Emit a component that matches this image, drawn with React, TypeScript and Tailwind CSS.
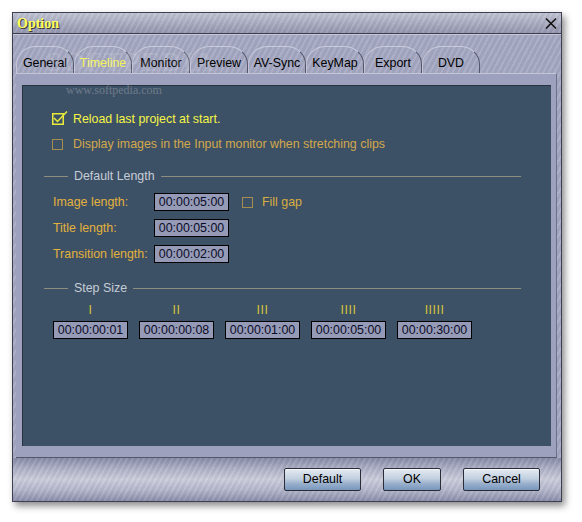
import React from "react";

const tabs = ["General", "Timeline", "Monitor", "Preview", "AV-Sync", "KeyMap", "Export", "DVD"];

function TimeBox({ v }: { v: string }) {
  return (
    <div className="w-[75px] h-[18px] border border-black bg-[#959ab7] text-[#0b0b26] text-[12.4px] leading-[16px] flex items-center justify-center">
      {v}
    </div>
  );
}

function Header({ title }: { title: string }) {
  return (
    <div className="flex items-center h-[14px] pl-[21px] pr-[30px]">
      <div className="w-[24px] h-px bg-[#8f8b7e]" />
      <div className="px-[6px] text-[12.4px] text-[#c5ccd6] leading-[14px] whitespace-nowrap">{title}</div>
      <div className="flex-1 h-px bg-[#8f8b7e]" />
    </div>
  );
}

function Box() {
  return <div className="w-[11px] h-[11px] border border-[#a68c4f]" />;
}

function Btn({ label, w }: { label: string; w: string }) {
  return (
    <div
      className={`${w} h-[23px] rounded-[2px] border border-[#2a2c38] bg-[linear-gradient(to_bottom,#e4eaf2_0%,#c3d0e0_45%,#98b0cc_70%,#7896bb_100%)] shadow-[inset_0_1px_0_rgba(255,255,255,0.7)] flex items-center justify-center text-[12.4px] text-black`}
    >
      {label}
    </div>
  );
}

export default function App() {
  return (
    <div className="w-[582px] h-[522px] bg-white pt-[12px] pl-[12px] font-['Liberation_Sans',Arial,sans-serif]">
      <div className="relative w-[550px] h-[490px] flex flex-col border border-[#3e4052] bg-[#a5a8c2] bg-[repeating-linear-gradient(118deg,rgba(255,255,255,0.08)_0px,rgba(255,255,255,0.08)_2px,rgba(0,0,0,0.035)_2px,rgba(0,0,0,0.035)_5px)] shadow-[3px_4px_7px_rgba(0,0,0,0.45)]">
        {/* title bar */}
        <div className="h-[20px] flex items-center justify-between pl-[4px] pr-[4px] bg-[repeating-linear-gradient(118deg,rgba(255,255,255,0.08)_0px,rgba(255,255,255,0.08)_2px,rgba(0,0,0,0.035)_2px,rgba(0,0,0,0.035)_5px),linear-gradient(to_bottom,#c1c4d4,#9396af)]">
          <span className="font-['Liberation_Serif',serif] font-bold text-[14px] text-[#ffff5c] [text-shadow:1px_1px_0_#3a3a3a]">
            Option
          </span>
          <svg width="12" height="11" viewBox="0 0 12 11">
            <path d="M1 0.5 L11 10.5 M11 0.5 L1 10.5" stroke="#111" strokeWidth="1.5" />
          </svg>
        </div>
        <div className="h-px bg-[#3c3e50]" />
        <div className="h-px bg-[#c6c8d8]" />

        {/* tabs */}
        <div className="mt-[11px] ml-[3px] flex h-[27px] relative">
          {tabs.map((t) => (
            <div
              key={t}
              className={`w-[58px] h-[27px] rounded-t-[20px_18px] border-t border-l border-r border-t-[#c9cbdc] border-l-[#c3c5d7] border-r-[#55586c] flex items-center justify-center pt-[7px] text-[12.4px] ${
                t === "Timeline" ? "text-[#f4f45a]" : "text-black"
              }`}
            >
              {t}
            </div>
          ))}
          <div className="absolute left-[30px] top-[2px] font-['Liberation_Serif',serif] font-bold text-[28px] leading-[28px] tracking-[1px] text-white/15 pointer-events-none">
            SOFTPEDIA
          </div>
        </div>

        {/* panel */}
        <div className="ml-[3px] mr-[4px] h-[385px] bg-[#9ea1bd] border-t border-t-[#c4c6d8] border-b border-b-[#55586c] border-r border-r-[#6d7088] pt-[11px] pb-[11px] pl-[6px] pr-[5px] flex flex-col">
          <div className="relative flex-1 bg-[#3d5166] border-t border-l border-[#26333f] flex flex-col">
            <div className="absolute left-[43px] top-[-5px] font-['Liberation_Serif',serif] text-[12px] text-white/25 pointer-events-none">
              www.softpedia.com
            </div>
            {/* row 1 */}
            <div className="mt-[26px] h-[14px] flex items-center pl-[29px]">
              <svg width="16" height="14" viewBox="0 0 16 14" className="mt-[-3px]">
                <rect x="0.75" y="2.75" width="10.5" height="10.5" fill="none" stroke="#eaea3a" strokeWidth="1.5" />
                <polyline points="2,7 5.5,10.5 15,0.5" fill="none" stroke="#eaea3a" strokeWidth="1.5" />
              </svg>
              <span className="ml-[5px] text-[12.4px] text-[#f5f545]">Reload last project at start.</span>
            </div>
            {/* row 2 */}
            <div className="mt-[11px] h-[14px] flex items-center pl-[29px]">
              <Box />
              <span className="ml-[10px] text-[12.4px] text-[#d2a84c]">Display images in the Input monitor when stretching clips</span>
            </div>

            <div className="mt-[18px]">
              <Header title="Default Length" />
            </div>

            <div className="mt-[10px] h-[18px] flex items-center pl-[30px]">
              <span className="w-[101px] text-[12.4px] text-[#e3b23c]">Image length:</span>
              <TimeBox v="00:00:05:00" />
              <div className="ml-[13px]">
                <Box />
              </div>
              <span className="ml-[9px] text-[12.4px] text-[#d8ae40]">Fill gap</span>
            </div>
            <div className="mt-[8px] h-[18px] flex items-center pl-[30px]">
              <span className="w-[101px] text-[12.4px] text-[#e3b23c]">Title length:</span>
              <TimeBox v="00:00:05:00" />
            </div>
            <div className="mt-[8px] h-[18px] flex items-center pl-[30px]">
              <span className="w-[101px] text-[12.4px] text-[#e3b23c] whitespace-nowrap">Transition length:</span>
              <TimeBox v="00:00:02:00" />
            </div>

            <div className="mt-[18px]">
              <Header title="Step Size" />
            </div>

            <div className="mt-[8px] flex gap-[11px] pl-[30px]">
              {[
                ["I", "00:00:00:01"],
                ["II", "00:00:00:08"],
                ["III", "00:00:01:00"],
                ["IIII", "00:00:05:00"],
                ["IIIII", "00:00:30:00"],
              ].map(([n, v]) => (
                <div key={v} className="flex flex-col items-center w-[75px]">
                  <div className="h-[14px] leading-[14px] text-[12.4px] text-[#d6c03a] tracking-[0.5px]">{n}</div>
                  <div className="mt-[4px]">
                    <TimeBox v={v} />
                  </div>
                </div>
              ))}
            </div>
          </div>
        </div>

        {/* bottom */}
        <div className="flex-1 bg-[repeating-linear-gradient(118deg,rgba(255,255,255,0.08)_0px,rgba(255,255,255,0.08)_2px,rgba(0,0,0,0.035)_2px,rgba(0,0,0,0.035)_5px),linear-gradient(to_bottom,#878ba6_0%,#aeb1c7_25%,#cbcddc_50%,#b3b6cb_75%,#8a8da9_100%)] flex items-start justify-end pt-[10px] pr-[21px] gap-[22px]">
          <Btn label="Default" w="w-[77px]" />
          <Btn label="OK" w="w-[58px]" />
          <Btn label="Cancel" w="w-[77px]" />
        </div>
      </div>
    </div>
  );
}
